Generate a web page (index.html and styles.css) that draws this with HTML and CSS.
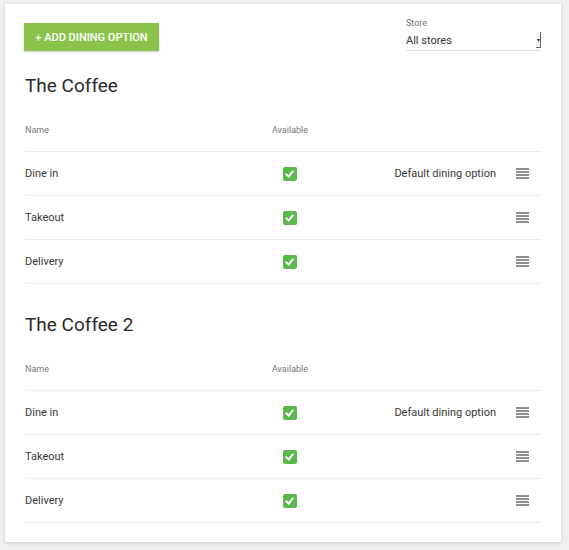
FILE: index.html
```html
<!DOCTYPE html>
<html>
<head>
<meta charset="utf-8">
<link rel="stylesheet" href="styles.css">
</head>
<body>
<div class="card">
  <div class="toolbar">
    <button class="add-btn">+ Add dining option</button>
    <div class="store">
      <div class="store-label">Store</div>
      <div class="store-select"><span>All stores</span><span class="arrow">▾</span></div>
    </div>
  </div>

  <section class="group">
    <h2 class="title">The Coffee</h2>
    <div class="row head"><div class="c-name">Name</div><div class="c-av">Available</div><div class="c-def"></div><div class="c-h"></div></div>
    <div class="row"><div class="c-name">Dine in</div><div class="c-av"><span class="check"></span></div><div class="c-def">Default dining option</div><div class="c-h"><svg class="handle" width="13" height="11" viewBox="0 0 13 11"><path d="M0 1H13M0 4H13M0 7H13M0 10H13" stroke="#6b6b6b" stroke-width="1.4"/></svg></div></div>
    <div class="row"><div class="c-name">Takeout</div><div class="c-av"><span class="check"></span></div><div class="c-def"></div><div class="c-h"><svg class="handle" width="13" height="11" viewBox="0 0 13 11"><path d="M0 1H13M0 4H13M0 7H13M0 10H13" stroke="#6b6b6b" stroke-width="1.4"/></svg></div></div>
    <div class="row"><div class="c-name">Delivery</div><div class="c-av"><span class="check"></span></div><div class="c-def"></div><div class="c-h"><svg class="handle" width="13" height="11" viewBox="0 0 13 11"><path d="M0 1H13M0 4H13M0 7H13M0 10H13" stroke="#6b6b6b" stroke-width="1.4"/></svg></div></div>
  </section>

  <section class="group second">
    <h2 class="title">The Coffee 2</h2>
    <div class="row head"><div class="c-name">Name</div><div class="c-av">Available</div><div class="c-def"></div><div class="c-h"></div></div>
    <div class="row"><div class="c-name">Dine in</div><div class="c-av"><span class="check"></span></div><div class="c-def">Default dining option</div><div class="c-h"><svg class="handle" width="13" height="11" viewBox="0 0 13 11"><path d="M0 1H13M0 4H13M0 7H13M0 10H13" stroke="#6b6b6b" stroke-width="1.4"/></svg></div></div>
    <div class="row"><div class="c-name">Takeout</div><div class="c-av"><span class="check"></span></div><div class="c-def"></div><div class="c-h"><svg class="handle" width="13" height="11" viewBox="0 0 13 11"><path d="M0 1H13M0 4H13M0 7H13M0 10H13" stroke="#6b6b6b" stroke-width="1.4"/></svg></div></div>
    <div class="row"><div class="c-name">Delivery</div><div class="c-av"><span class="check"></span></div><div class="c-def"></div><div class="c-h"><svg class="handle" width="13" height="11" viewBox="0 0 13 11"><path d="M0 1H13M0 4H13M0 7H13M0 10H13" stroke="#6b6b6b" stroke-width="1.4"/></svg></div></div>
  </section>
</div>
</body>
</html>
```

FILE: styles.css
```css
html, body {
  margin: 0;
  padding: 0;
  background: #efefef;
  font-family: Roboto, "Liberation Sans", Arial, sans-serif;
  color: #333;
}
body {
  padding: 4px 8px 8px 5px;
}
.card {
  background: #fff;
  width: 556px;
  height: 538px;
  box-sizing: border-box;
  padding: 19px 20px 0 20px;
  box-shadow: 0 1px 3px rgba(0,0,0,0.15);
}
.toolbar {
  display: flex;
  justify-content: space-between;
  align-items: flex-start;
  height: 49px;
}
.add-btn {
  margin: 0 0 0 -1px;
  height: 28px;
  width: 135px;
  border: none;
  background: #8bc34a;
  color: #fff;
  font-family: Roboto, "Liberation Sans", sans-serif;
  font-weight: 500;
  font-size: 11px;
  text-transform: uppercase;
  padding: 0;
  box-shadow: 0 1px 2px rgba(0,0,0,0.2);
}
.store {
  width: 135px;
  margin-top: -6px;
}
.store-label {
  font-size: 9px;
  color: #777;
  line-height: 12px;
}
.store-select {
  display: flex;
  justify-content: space-between;
  align-items: center;
  font-size: 11px;
  color: #333;
  height: 20px;
  border-bottom: 1px solid #ddd;
  margin-top: 1px;
}
.arrow {
  width: 4px;
  height: 15px;
  border-right: 1px solid #666;
  border-bottom: 1px solid #666;
  font-size: 6px;
  line-height: 15px;
  color: #333;
  text-align: center;
  background: #f4f4f4;
  overflow: hidden;
}
.title {
  margin: 0;
  font-weight: 400;
  font-size: 19px;
  line-height: 28px;
  color: #2a2a2a;
  padding-bottom: 9px;
}
.group.second {
  margin-top: 27px;
}
.row {
  display: flex;
  align-items: center;
  height: 43px;
  border-bottom: 1px solid #ebebeb;
  font-size: 11px;
  color: #383838;
}
.row.head {
  height: 42px;
  font-size: 9px;
  color: #777;
}
.c-name {
  width: 236px;
}
.c-av {
  width: 58px;
  text-align: center;
  display: flex;
  justify-content: center;
}
.c-def {
  flex: 1;
  text-align: right;
}
.c-h {
  width: 45px;
  display: flex;
  justify-content: flex-end;
  padding-right: 12px;
  box-sizing: border-box;
}
.check {
  width: 14px;
  height: 14px;
  border-radius: 2px;
  background: #5bb84d;
  position: relative;
  display: block;
}
.check::after {
  content: "";
  position: absolute;
  left: 4px;
  top: 2px;
  width: 3px;
  height: 6px;
  border-right: 2px solid #fff;
  border-bottom: 2px solid #fff;
  transform: rotate(40deg);
}
.handle {
  display: block;
}
```
